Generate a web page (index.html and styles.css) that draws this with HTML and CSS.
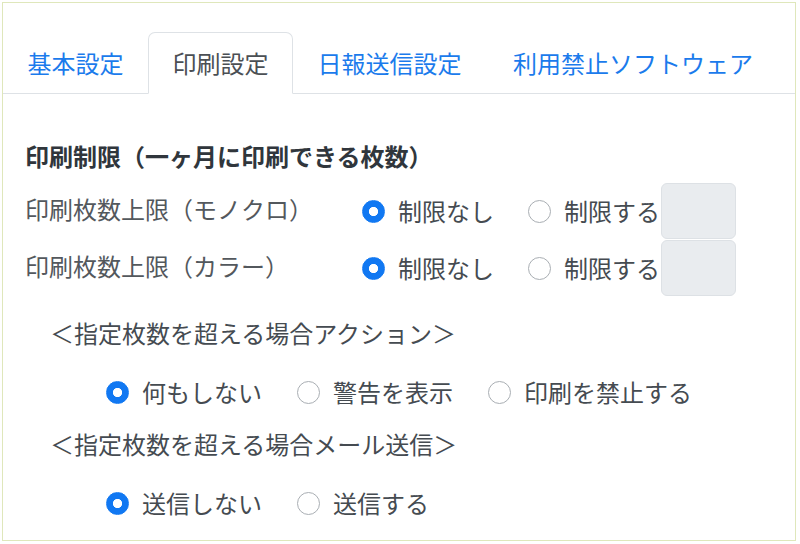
FILE: index.html
```html
<!DOCTYPE html>
<html lang="ja">
<head>
<meta charset="utf-8">
<title>印刷設定</title>
<link rel="stylesheet" href="styles.css">
</head>
<body>
<div class="frame">
  <ul class="tabs">
    <li><a class="tab" href="#">基本設定</a></li>
    <li><a class="tab active" href="#">印刷設定</a></li>
    <li><a class="tab" href="#">日報送信設定</a></li>
    <li><a class="tab" href="#">利用禁止ソフトウェア</a></li>
  </ul>
  <div class="pane">
    <h6 class="section-title">印刷制限（一ヶ月に印刷できる枚数）</h6>
    <div class="limit-row">
      <span class="row-label">印刷枚数上限（モノクロ）</span>
      <div class="choices">
        <label class="choice"><input type="radio" name="mono" checked><span>制限なし</span></label>
        <label class="choice"><input type="radio" name="mono"><span>制限する</span></label>
        <input class="count" type="text" disabled>
      </div>
    </div>
    <div class="limit-row">
      <span class="row-label">印刷枚数上限（カラー）</span>
      <div class="choices">
        <label class="choice"><input type="radio" name="color" checked><span>制限なし</span></label>
        <label class="choice"><input type="radio" name="color"><span>制限する</span></label>
        <input class="count" type="text" disabled>
      </div>
    </div>
    <p class="sub-head">＜指定枚数を超える場合アクション＞</p>
    <div class="choice-row">
      <label class="choice"><input type="radio" name="action" checked><span>何もしない</span></label>
      <label class="choice"><input type="radio" name="action"><span>警告を表示</span></label>
      <label class="choice"><input type="radio" name="action"><span>印刷を禁止する</span></label>
    </div>
    <p class="sub-head">＜指定枚数を超える場合メール送信＞</p>
    <div class="choice-row">
      <label class="choice"><input type="radio" name="mail" checked><span>送信しない</span></label>
      <label class="choice"><input type="radio" name="mail"><span>送信する</span></label>
    </div>
  </div>
</div>
</body>
</html>
```

FILE: styles.css
```css
html, body {
  margin: 0;
  padding: 0;
  background: #ffffff;
}
body {
  font-family: "Noto Sans CJK JP", "Noto Sans", sans-serif;
  font-size: 24px;
  line-height: 36px;
  color: #454b51;
}
.frame {
  margin: 2px 0 0 2px;
  width: 792px;
  height: 537px;
  border: 1px solid #dfe7bb;
  box-sizing: content-box;
}
.tabs {
  list-style: none;
  margin: 0;
  padding: 29px 0 0 0;
  display: flex;
  border-bottom: 1px solid #dee2e6;
}
.tabs li {
  margin-bottom: -1px;
}
.tab {
  display: block;
  height: 60px;
  line-height: 60px;
  padding: 0 23.5px;
  border: 1px solid transparent;
  border-radius: 7px 7px 0 0;
  color: #1b7bec;
  text-decoration: none;
  white-space: nowrap;
}
.tab.active {
  color: #4b4f54;
  background: #ffffff;
  border-color: #dee2e6 #dee2e6 #ffffff;
}
.tabs li:nth-child(4) .tab {
  padding-left: 26px;
}
.pane {
  padding: 44px 0 0 22px;
}
.section-title {
  margin: 0 0 9px 0;
  font-size: 24px;
  line-height: 36px;
  font-weight: 700;
  color: #30363c;
}
.limit-row {
  display: grid;
  grid-template-columns: 337px auto;
  align-items: center;
  height: 56px;
  margin-bottom: 1px;
}
.row-label {
  color: #53585d;
  padding-bottom: 5px;
}
.choices {
  display: flex;
  align-items: center;
}
.choice {
  display: flex;
  align-items: center;
  margin-right: 35px;
  white-space: nowrap;
}
.choices .choice:first-child {
  margin-right: 34px;
}
.choices .choice:nth-child(2) {
  margin-right: 1px;
}
.choice input {
  appearance: none;
  -webkit-appearance: none;
  margin: 0 13px 0 0;
  width: 23px;
  height: 23px;
  border-radius: 50%;
  border: 1.5px solid #a9aeb3;
  background: #ffffff;
  box-sizing: border-box;
  flex: none;
}
.choice input:checked {
  border-color: #1178f2;
  background: radial-gradient(circle, #ffffff 0 4.3px, #1178f2 4.9px);
}
.count {
  width: 75px;
  height: 56px;
  box-sizing: border-box;
  border: 1px solid #dde1e5;
  border-radius: 6px;
  background: #e9ecef;
  margin: 0;
  padding: 0;
}
.sub-head {
  margin: 19px 0 0 25px;
  line-height: 36px;
}
.choice-row {
  display: flex;
  align-items: center;
  padding: 23px 0 0 81px;
  height: 36px;
}
.sub-head + .choice-row + .sub-head {
  margin-top: 16px;
}
```
